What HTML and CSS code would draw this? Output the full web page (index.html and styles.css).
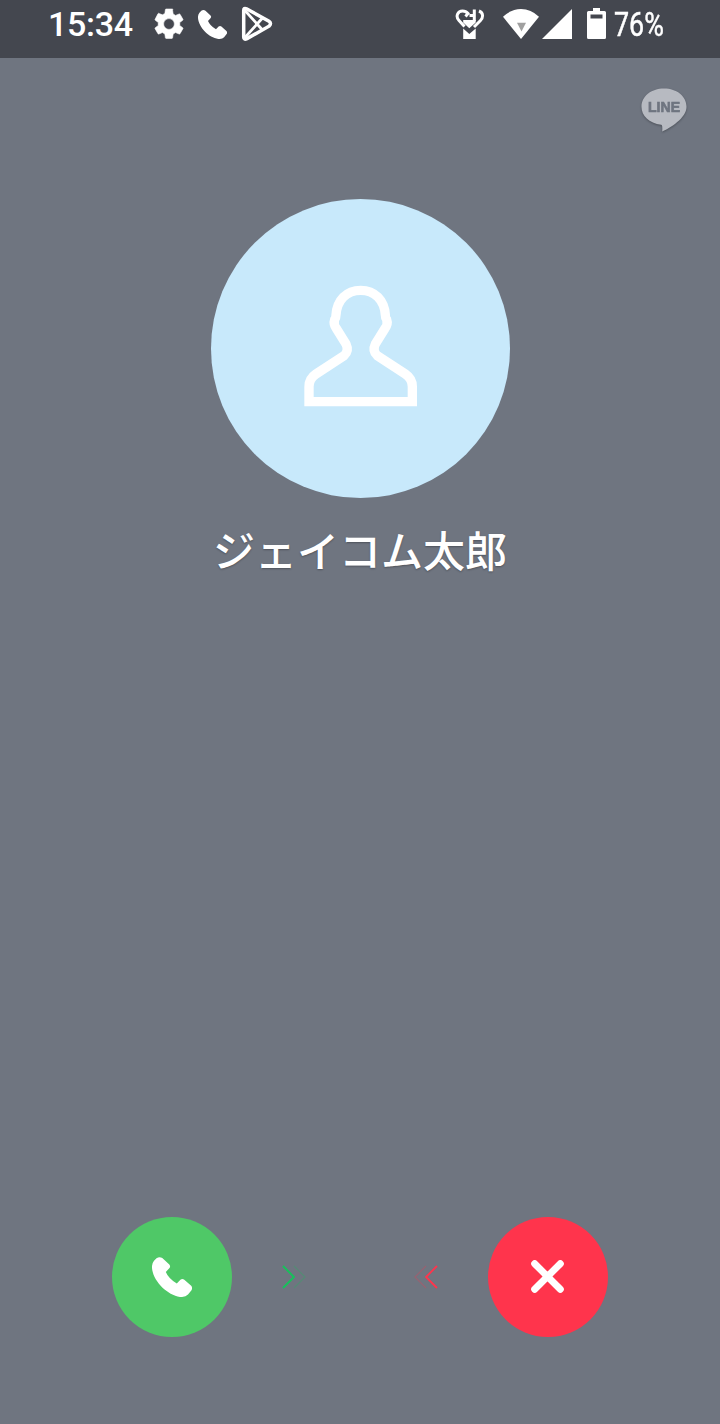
FILE: index.html
```html
<!DOCTYPE html>
<html lang="ja">
<head>
    <meta charset="UTF-8">
    <meta name="viewport" content="width=device-width, initial-scale=1.0">
    <title>LINE 着信</title>
    <link rel="stylesheet" href="styles.css">
</head>
<body>
    <svg width="0" height="0" class="defs">
        <symbol id="phone" viewBox="0 0 40 40">
            <path d="M4.5 1.2Q7.5-.8 10.3 1L17.3 7.6Q18.8 9.3 17.5 11L13.8 15Q16.5 21.5 24.8 26.5L28.4 22.8Q30.4 21.2 32.3 22.8L39.2 28.8Q40.8 31 39.5 33.2L36 37.6Q33.3 40.5 28 39.9C15 38 1 24 0 11Q-.3 6.5 2 3.7Z"/>
        </symbol>
    </svg>

    <!-- ステータスバー -->
    <header class="status-bar">
        <span class="clock">15:34</span>
        <div class="notifications">
            <svg class="icon gear" width="30" height="30" viewBox="2 2 20 20">
                <path d="M19.14 12.94c.04-.3.06-.61.06-.94 0-.32-.02-.64-.07-.94l2.03-1.58a.49.49 0 0 0 .12-.61l-1.92-3.32a.49.49 0 0 0-.59-.22l-2.39.96c-.5-.38-1.03-.7-1.62-.94l-.36-2.54A.48.48 0 0 0 13.92 2h-3.84a.48.48 0 0 0-.48.41l-.36 2.54c-.59.24-1.13.57-1.62.94l-2.39-.96a.49.49 0 0 0-.59.22L2.74 8.87a.48.48 0 0 0 .12.61l2.03 1.58c-.05.3-.09.63-.09.94s.02.64.07.94l-2.03 1.58a.49.49 0 0 0-.12.61l1.92 3.32c.12.22.37.29.59.22l2.39-.96c.5.38 1.03.7 1.62.94l.36 2.54c.05.24.24.41.48.41h3.84c.24 0 .44-.17.47-.41l.36-2.54c.59-.24 1.13-.56 1.62-.94l2.39.96c.22.08.47 0 .59-.22l1.92-3.32a.48.48 0 0 0-.12-.61zM12 15.6A3.61 3.61 0 0 1 8.4 12c0-1.98 1.62-3.6 3.6-3.6s3.6 1.62 3.6 3.6-1.62 3.6-3.6 3.6z"/>
            </svg>
            <svg class="icon" width="29" height="29"><use href="#phone"/></svg>
            <svg class="icon-line" width="32" height="36" viewBox="0 0 32 36">
                <path d="M2.7 4.5Q2.7 1.5 5.5 2.8L28 15.2Q31 17.2 28 20.2L6 32.6Q2.7 34.2 2.7 31Z"/>
                <path class="thin" d="M3.5 4 21.5 24M3.5 32 21.5 12"/>
            </svg>
        </div>
        <div class="system">
            <svg class="heart" width="30" height="32" viewBox="0 0 30 32">
                <path class="fill" d="M8.2 20.5 14.3 26 20.7 20.5V31H8.2ZM8.2 12H20.7V14.5L14.3 20.3 8.2 14.5Z"/>
                <path d="M9.5 18.5 4 12.5C0 8 3 3 7.5 3Q11 3 13 5.5L10.5 8.5M19.3 1.5V13M14.5 7.5H18M24 3C29 5 28 10 25.5 12.5L19 19"/>
            </svg>
            <svg class="wifi" width="36" height="30" viewBox="0 0 36 30">
                <path class="fill" d="M0 7.8Q8 0 18 0T36 7.8L18 30Z"/>
                <path class="level" d="M14 13.7H23L18.5 22.5Z"/>
            </svg>
            <svg class="icon" width="30" height="30" viewBox="0 0 30 30"><path d="M0 30 30 0V30Z"/></svg>
            <svg class="battery" width="19" height="31" viewBox="0 0 19 31">
                <path fill-rule="evenodd" d="M6 0H13V3H17.5Q19 3 19 4.5V29.5Q19 31 17.5 31H1.5Q0 31 0 29.5V4.5Q0 3 1.5 3H6ZM3.5 6.5V10.5H15.5V6.5Z"/>
            </svg>
            <span class="percent">76%</span>
        </div>
    </header>

    <main class="call">
        <svg class="line-logo" width="50" height="48" viewBox="0 0 50 48">
            <path d="M25 2.5C12 2.5 2.5 10.5 2.5 20.7C2.5 30 10 37 22.3 38.8Q23.7 39 23.2 45.5C31 42 47.5 32 47.5 20.7C47.5 10.5 38 2.5 25 2.5Z"/>
            <text x="9" y="26.3" textLength="32" lengthAdjust="spacingAndGlyphs">LINE</text>
        </svg>

        <div class="avatar">
            <svg width="140" height="150" viewBox="0 0 420 450">
                <path d="M57 395V350Q57 326 78 312L162 257Q178 243 168 222L140 177Q129 163 134 149Q138 144 138 135C141 90 170 61 212 61S283 90 286 135Q286 144 290 149Q295 163 284 177L256 222Q246 243 262 257L346 312Q367 326 367 350V395Z"/>
            </svg>
        </div>
        <h1 class="caller">ジェイコム太郎</h1>

        <div class="actions">
            <button class="btn answer" aria-label="応答">
                <svg class="icon" width="40" height="40"><use href="#phone"/></svg>
            </button>
            <div class="hints">
                <svg class="hint-answer" width="26" height="24" viewBox="0 0 26 24">
                    <path d="M1 1 12 12 1 23"/>
                    <path class="faint" d="M12 1 23 12 12 23"/>
                </svg>
                <svg class="hint-decline" width="26" height="24" viewBox="0 0 26 24">
                    <path d="M25 1 14 12 25 23"/>
                    <path class="faint" d="M14 1 3 12 14 23"/>
                </svg>
            </div>
            <button class="btn decline" aria-label="拒否">
                <svg width="34" height="34" viewBox="0 0 34 34"><path d="M3.7 3.7 29.3 29.3M29.3 3.7 3.7 29.3"/></svg>
            </button>
        </div>
    </main>
</body>
</html>
```

FILE: styles.css
```css
* {
    box-sizing: border-box;
}
body {
    margin: 0;
    height: 1424px;
    display: flex;
    flex-direction: column;
    background-color: #6f7580;
    color: #fff;
    font-family: Roboto, "Noto Sans CJK JP", sans-serif;
}
svg {
    display: block;
    flex: none;
}
.defs {
    position: absolute;
}
.status-bar {
    display: flex;
    align-items: center;
    height: 58px;
    padding: 0 56px 10px 48px;
    background-color: #44474f;
}
.clock {
    width: 106px;
    font-size: 34px;
    font-weight: 500;
    line-height: 48px;
    letter-spacing: -0.3px;
}
.notifications {
    display: flex;
    align-items: center;
    gap: 14px;
}
.icon, .fill, .battery {
    fill: #fff;
}
.gear {
    overflow: visible;
    stroke: #fff;
    stroke-width: 0.4;
}
.icon-line {
    fill: none;
    stroke: #fff;
    stroke-width: 3.5;
}
.icon-line .thin {
    stroke-width: 2.8;
}
.system {
    display: flex;
    align-items: center;
    margin-left: auto;
}
.heart {
    margin-right: 18px;
    fill: none;
    stroke: #fff;
    stroke-width: 3;
}
.heart .fill {
    fill: #fff;
    stroke: none;
}
.wifi {
    margin-right: 3px;
}
.level {
    fill: #a0a0a0;
}
.battery {
    margin: 0 8px 1px 15px;
}
.percent {
    width: 50px;
    font-size: 34px;
    line-height: 48px;
    transform: scaleX(0.79);
    transform-origin: left;
    -webkit-text-stroke: 0.5px #fff;
}

.call {
    flex: 1;
    display: flex;
    flex-direction: column;
    align-items: center;
}
.line-logo {
    align-self: flex-end;
    margin: 28px 31px 0 0;
    fill: #b7bac1;
    filter: drop-shadow(0 1px 1px rgba(0, 0, 0, 0.3));
}
.line-logo text {
    font: bold 15px "Liberation Sans", sans-serif;
    fill: #6f7580;
    stroke: #6f7580;
    stroke-width: 0.7;
}
.avatar {
    width: 299px;
    height: 299px;
    margin: 65px 0 0 1px;
    padding: 71px 0 0 79px;
    border-radius: 50%;
    background-color: #c8e9fb;
}
.avatar path {
    fill: none;
    stroke: #fff;
    stroke-width: 28;
}
.caller {
    margin: 20px 0 0;
    font: 500 42px/62px "Noto Sans CJK JP", sans-serif;
    text-shadow: 0 1px 2px rgba(0, 0, 0, 0.3);
}
.actions {
    display: flex;
    align-items: center;
    width: 496px;
    margin: auto 0 87px;
}
.btn {
    display: flex;
    align-items: center;
    justify-content: center;
    width: 120px;
    height: 120px;
    padding: 0;
    border: none;
    border-radius: 50%;
}
.answer {
    background-color: #4fc867;
}
.decline {
    background-color: #ff344c;
}
.decline path {
    stroke: #fff;
    stroke-width: 7;
    stroke-linecap: round;
}
.hints {
    flex: 1;
    display: flex;
    justify-content: space-between;
    padding: 0 50px;
}
.hints path {
    fill: none;
    stroke-width: 1.8;
}
.hint-answer {
    stroke: #14c35a;
}
.hint-decline {
    stroke: #ff344c;
}
.hints .faint {
    stroke-width: 1.2;
    opacity: 0.28;
}
```
